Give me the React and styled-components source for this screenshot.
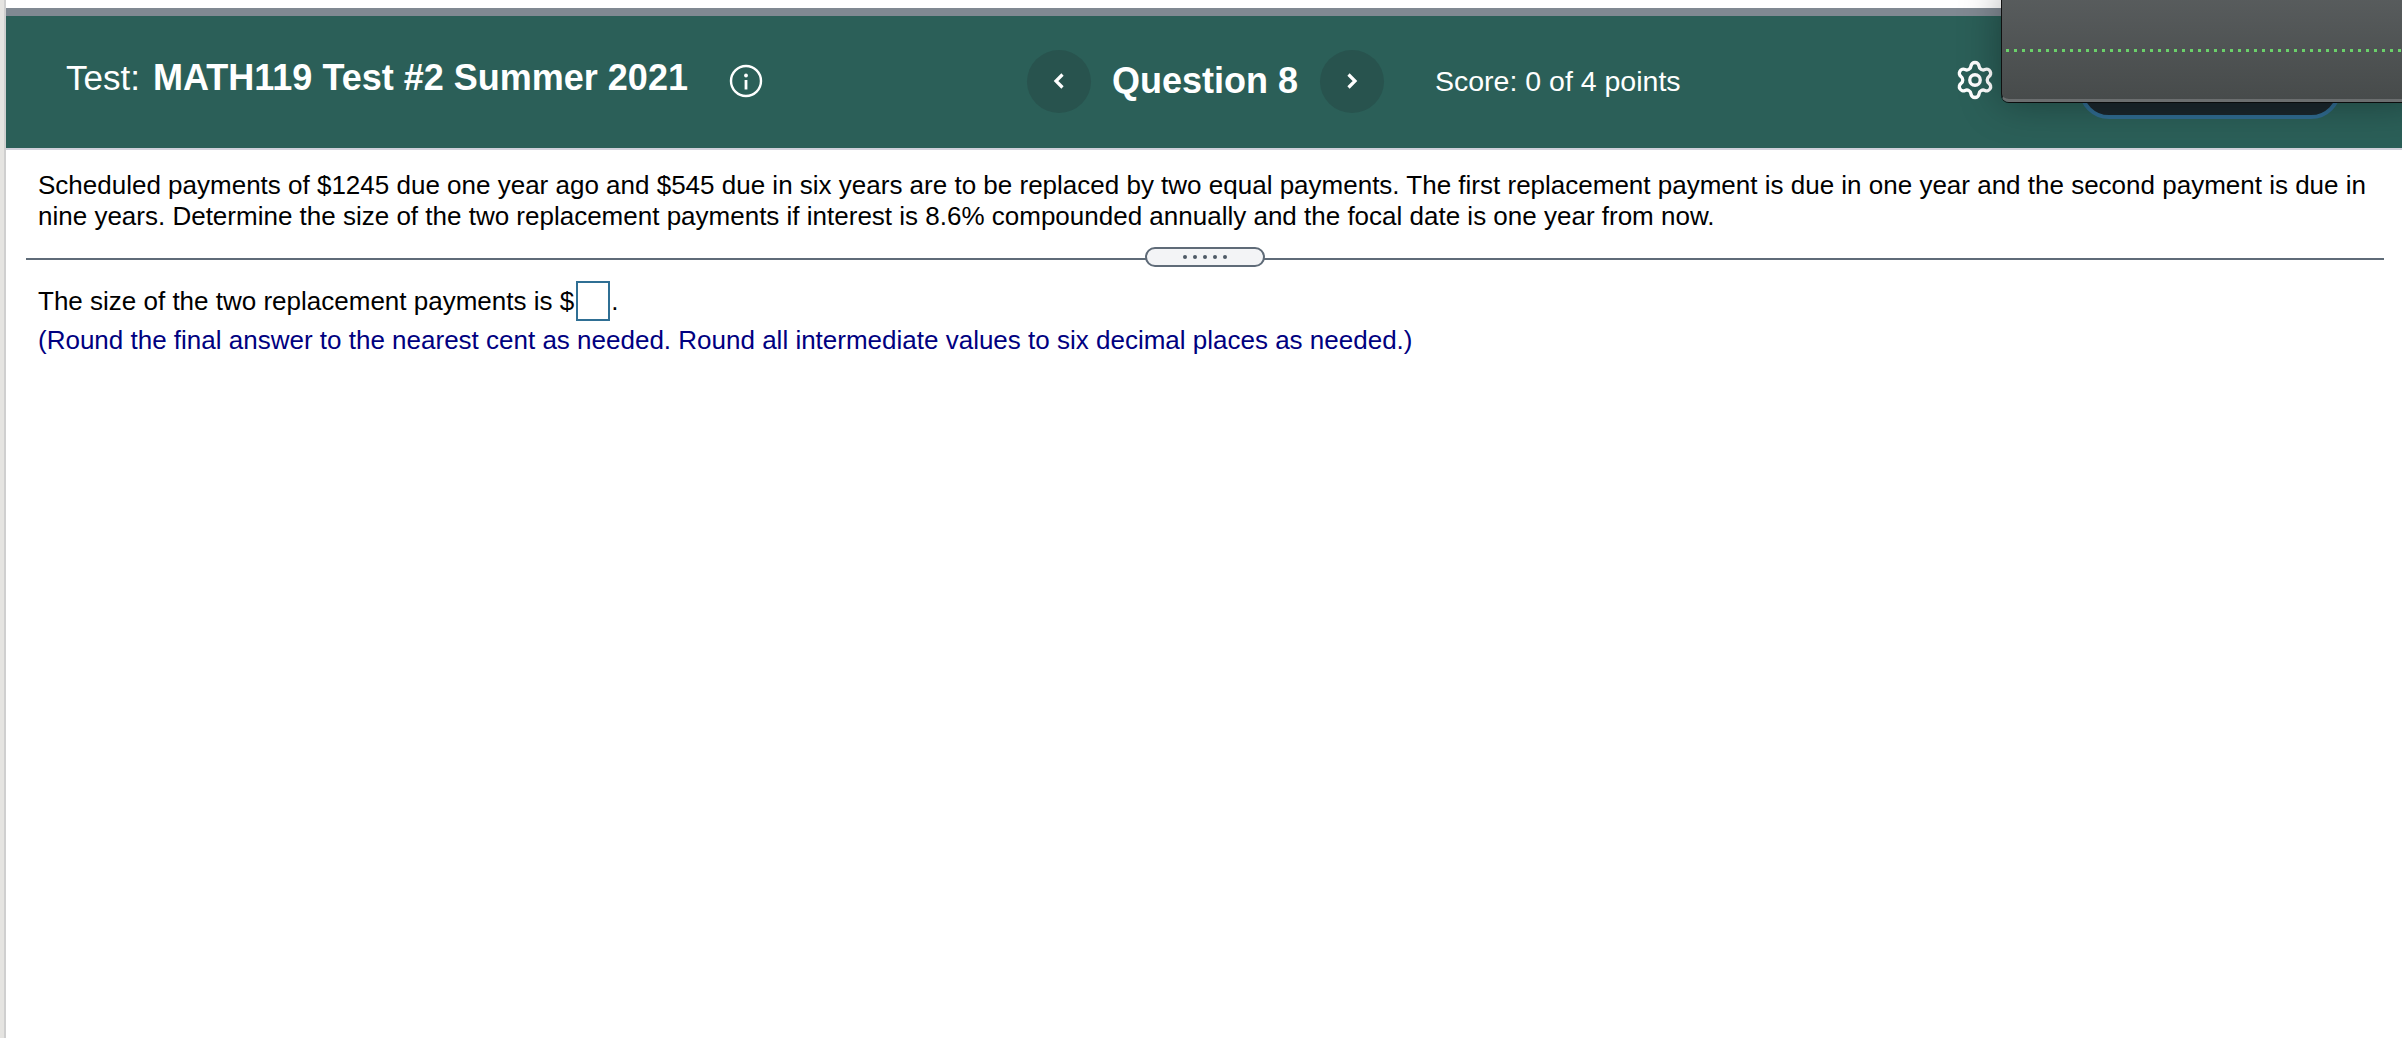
import React from "react";
import styled, { createGlobalStyle } from "styled-components";

const GlobalStyle = createGlobalStyle`
  html, body { margin: 0; padding: 0; background: #fff; }
  body { font-family: "Liberation Sans", Arial, sans-serif; overflow: hidden; }
`;

const Page = styled.div`
  position: relative;
  display: flex;
  width: 2402px;
  height: 1038px;
  overflow: hidden;
  background: #fff;
`;

const SideStrip = styled.div`
  width: 4px;
  flex-shrink: 0;
  border-right: 2px solid #cfcfcf;
  background: #e5e4e1;
`;

const Main = styled.div`
  flex: 1;
  min-width: 0;
  padding-top: 8px;
`;

const ProgressBar = styled.div`
  height: 8px;
  background: #808992;
`;

const Header = styled.header`
  position: relative;
  display: flex;
  align-items: center;
  height: 132px;
  box-sizing: content-box;
  padding-left: 60px;
  border-bottom: 2px solid #d0d0da;
  background: #2b5f58;
  color: #fff;
`;

const TestLabel = styled.div`
  font-size: 35px;
  width: 87px;
  margin-top: -8px;
`;

const TestName = styled.div`
  font-size: 36px;
  font-weight: 700;
  width: 533px;
  white-space: nowrap;
  margin-top: -8px;
`;

const InfoButton = styled.svg`
  width: 34px;
  height: 34px;
  margin-left: 43px;
  margin-top: -2px;
`;

const NavButton = styled.div`
  width: 64px;
  height: 63px;
  flex-shrink: 0;
  margin-left: ${(p) => p.$left}px;
  border-radius: 50%;
  background: #28534e;
  display: flex;
  align-items: center;
  justify-content: center;
  margin-top: -2px;
`;

const QuestionTitle = styled.div`
  width: 186px;
  margin: -2px 22px 0 21px;
  font-size: 36px;
  font-weight: 700;
  white-space: nowrap;
`;

const Score = styled.div`
  margin-left: 51px;
  margin-top: -2px;
  font-size: 28.5px;
  white-space: nowrap;
`;

const GearIcon = styled.svg`
  position: absolute;
  left: 1948px;
  top: 43px;
  width: 42px;
  height: 42px;
`;

const HiddenButton = styled.div`
  position: absolute;
  left: 2073px;
  top: 10px;
  width: 262px;
  height: 93px;
  box-sizing: border-box;
  border: 4px solid #2f6a8f;
  border-radius: 30px;
  background: #1a262c;
`;

const FloatingWindow = styled.div`
  position: absolute;
  left: 2001px;
  top: -10px;
  width: 420px;
  height: 112px;
  box-sizing: border-box;
  border: 1px solid #111;
  border-bottom: 3px solid #6b6e6f;
  border-radius: 8px;
  background: linear-gradient(180deg, #595d5e 0%, #474b4b 100%);
  box-shadow: 0 0 40px rgba(0, 0, 0, 0.35), 0 1px 0 #0d0f10;
`;

const DottedLine = styled.div`
  position: absolute;
  left: 4px;
  right: 0;
  top: 58px;
  height: 3px;
  background-image: linear-gradient(90deg, #6ad06a 3px, transparent 3px);
  background-size: 8px 3px;
`;

const Prompt = styled.div`
  padding: 20px 16px 0 32px;
  font-size: 26px;
  line-height: 31px;
  color: #000;
`;

const Divider = styled.div`
  position: relative;
  height: 2px;
  margin: 26px 18px 0 20px;
  background: #5f6b78;
`;

const Grip = styled.div`
  position: absolute;
  left: 1119px;
  top: -11px;
  width: 120px;
  height: 20px;
  box-sizing: border-box;
  border: 2px solid #5f6b78;
  border-radius: 10px;
  background: #f3f4f6;
  display: flex;
  align-items: center;
  justify-content: center;
  gap: 6px;
`;

const GripDot = styled.span`
  width: 4px;
  height: 4px;
  border-radius: 50%;
  background: #4f5a66;
`;

const Answer = styled.div`
  padding: 21px 0 0 32px;
`;

const AnswerLine = styled.div`
  display: flex;
  align-items: center;
  height: 40px;
  font-size: 26px;
  color: #000;
`;

const AnswerBox = styled.div`
  width: 34px;
  height: 40px;
  box-sizing: border-box;
  margin: 0 1px 0 2px;
  border: 2px solid #2f6f94;
  background: #fff;
`;

const Hint = styled.div`
  margin-top: 3px;
  font-size: 26px;
  line-height: 32px;
  color: #000080;
`;

export default function App() {
  return (
    <Page>
      <GlobalStyle />
      <SideStrip />
      <Main>
        <ProgressBar />
        <Header>
          <TestLabel>Test:</TestLabel>
          <TestName>MATH119 Test #2 Summer 2021</TestName>
          <InfoButton viewBox="0 0 34 34" fill="none" stroke="#fff">
            <circle cx="17" cy="17" r="15" strokeWidth="2.4" />
            <circle cx="17" cy="11.5" r="1.9" fill="#fff" stroke="none" />
            <path d="M17 16v9.5" strokeWidth="2.8" />
          </InfoButton>
          <NavButton $left={264}>
            <svg width="16" height="18" viewBox="0 0 16 18" fill="none" stroke="#fff" strokeWidth="3.2">
              <path d="M11.5 2.5 5 9l6.5 6.5" />
            </svg>
          </NavButton>
          <QuestionTitle>Question 8</QuestionTitle>
          <NavButton $left={0}>
            <svg width="16" height="18" viewBox="0 0 16 18" fill="none" stroke="#fff" strokeWidth="3.2">
              <path d="M4.5 2.5 11 9l-6.5 6.5" />
            </svg>
          </NavButton>
          <Score>Score: 0 of 4 points</Score>
          <GearIcon viewBox="0 0 24 24" fill="none" stroke="#fff" strokeWidth="1.9" strokeLinecap="round" strokeLinejoin="round">
            <path d="M9.671 4.136a2.34 2.34 0 0 1 4.659 0 2.34 2.34 0 0 0 3.319 1.915 2.34 2.34 0 0 1 2.33 4.033 2.34 2.34 0 0 0 0 3.831 2.34 2.34 0 0 1-2.33 4.033 2.34 2.34 0 0 0-3.319 1.915 2.34 2.34 0 0 1-4.659 0 2.34 2.34 0 0 0-3.32-1.915 2.34 2.34 0 0 1-2.33-4.033 2.34 2.34 0 0 0 0-3.831A2.34 2.34 0 0 1 6.35 6.051a2.34 2.34 0 0 0 3.319-1.915" />
            <circle cx="12" cy="12" r="3" />
          </GearIcon>
          <HiddenButton />
        </Header>
        <Prompt>
          Scheduled payments of $1245 due one year ago and $545 due in six years are to be replaced by two equal payments. The first replacement payment is due in one year and the second payment is due in nine years. Determine the size of the two replacement payments if interest is 8.6% compounded annually and the focal date is one year from now.
        </Prompt>
        <Divider>
          <Grip>
            <GripDot />
            <GripDot />
            <GripDot />
            <GripDot />
            <GripDot />
          </Grip>
        </Divider>
        <Answer>
          <AnswerLine>
            The size of the two replacement payments is $
            <AnswerBox />.
          </AnswerLine>
          <Hint>(Round the final answer to the nearest cent as needed. Round all intermediate values to six decimal places as needed.)</Hint>
        </Answer>
      </Main>
      <FloatingWindow>
        <DottedLine />
      </FloatingWindow>
    </Page>
  );
}
